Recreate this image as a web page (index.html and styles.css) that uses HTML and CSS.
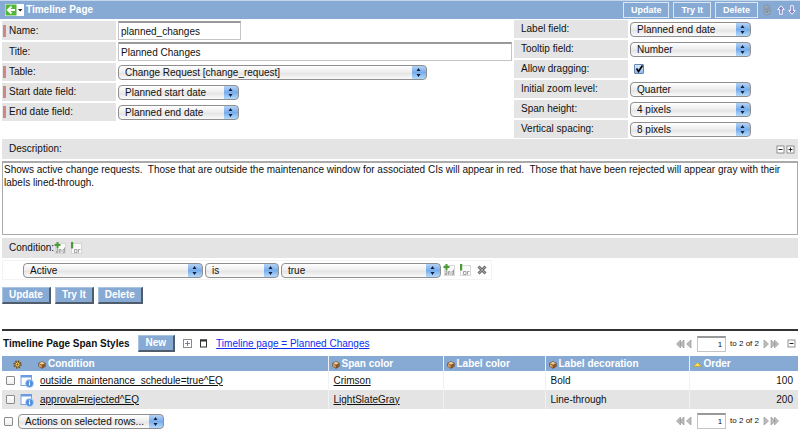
FILE: index.html
```html
<!DOCTYPE html>
<html lang="en">
<head>
<meta charset="utf-8">
<title>Timeline Page</title>
<link rel="stylesheet" href="styles.css">
</head>
<body>
<svg class="defs" aria-hidden="true">
  <symbol id="and" viewBox="0 0 12 12">
    <rect x="1.500" y="1.500" width="10" height="10" fill="#fafafa" stroke="#d0d0d0" stroke-width=".8"/>
    <path d="M2.500 7.500h1.500v3H2.500V9H4M5.500 10.800V7.500h1.500v3.300M10.500 5.500v5H9v-3h1.500" fill="none" stroke="#8d8d8d" stroke-width=".8"/>
    <path d="M2.500 0h2v2h2v2h-2v2.500h-2V4H.500V2h2z" fill="#4c9a35"/>
  </symbol>
  <symbol id="or" viewBox="0 0 12 12">
    <rect x="1.500" y="1.500" width="10" height="10" fill="#fafafa" stroke="#d0d0d0" stroke-width=".8"/>
    <path d="M4.500 7.500H7v3H4.500zM8.500 10.800V7.500h2" fill="none" stroke="#8d8d8d" stroke-width=".8"/>
    <path d="M1 0h2.200v6.500H1z" fill="#4c9a35"/>
  </symbol>
  <symbol id="cube" viewBox="0 0 8 8">
    <path d="M4 .3 7.600 2v3.600L4 7.700.4 5.600V2z" fill="#6b4320"/>
    <path d="M4 .8 7 2.200 4 3.700 1 2.200z" fill="#f0cf98"/>
    <path d="M1 2.800 3.700 4.200V7L1 5.400z" fill="#d9a05c"/>
    <path d="M7 2.800 4.400 4.200V7L7 5.400z" fill="#8d5c2e"/>
  </symbol>
  <symbol id="record" viewBox="0 0 14 14">
    <rect x="1" y="1.500" width="10.500" height="10" fill="#fff" stroke="#7ba4dc"/>
    <path d="M1 1h11v2.500H1z" fill="#6c9be0"/>
    <circle cx="9.500" cy="9.500" r="4" fill="#4f8fe0" stroke="#c4dbf5" stroke-width=".7"/>
    <path d="M9.500 6.800v.9M9.500 8.600v3" stroke="#fff" stroke-width="1.200"/>
  </symbol>
  <symbol id="first" viewBox="0 0 16 10">
    <path d="M4.500 1v8L.5 5zM8 1v8L3.500 5zM15 1v8l-4.500-4z" fill="#bcbcbc" stroke="#989898" stroke-width=".7"/>
  </symbol>
  <symbol id="last" viewBox="0 0 16 10">
    <path d="M1 1v8l4.500-4zM11.500 1v8l4-4zM8 1v8l4.500-4z" fill="#bcbcbc" stroke="#989898" stroke-width=".7"/>
  </symbol>
  <symbol id="minus" viewBox="0 0 9 9">
    <rect x="1" y="1" width="7" height="7" fill="#fff" stroke="#777" stroke-width=".8"/><path d="M2.500 4.500h4" stroke="#222"/>
  </symbol>
  <symbol id="plus" viewBox="0 0 9 9">
    <rect x="1" y="1" width="7" height="7" fill="#fff" stroke="#777" stroke-width=".8"/><path d="M2.500 4.500h4M4.500 2.500v4" stroke="#222"/>
  </symbol>
</svg>

<header class="titlebar">
  <button class="back" aria-label="Back">
    <svg width="19" height="12" viewBox="0 0 19 12"><rect width="19" height="12" fill="#fff"/><rect x=".5" y=".5" width="11" height="11" fill="#55b53a"/><path d="M10 6H3.500M6.500 2.500 3 6l3.500 3.500" fill="none" stroke="#fff" stroke-width="2"/><path d="M13 5h4.500l-2.250 2.500z" fill="#222"/></svg>
  </button>
  <h1>Timeline Page</h1>
  <div class="actions">
    <button class="flat">Update</button>
    <button class="flat">Try It</button>
    <button class="flat">Delete</button>
  </div>
  <svg class="clip" width="8" height="12" viewBox="0 0 8 12"><rect x="1" y="1" width="6" height="10" rx="3" fill="#a7b0bb" stroke="#7f8fa3"/><path d="M3 3.500v4.500q1 1.500 2 0V3" fill="none" stroke="#71839b"/></svg>
  <button class="nav" aria-label="Previous record"><svg width="8" height="10" viewBox="0 0 8 10"><path d="M4 .7 7.300 4.500H5.300v4.800H2.700V4.500H.7z" fill="#8a7fd0" stroke="#fff" stroke-width=".9"/></svg></button>
  <button class="nav" aria-label="Next record"><svg width="8" height="10" viewBox="0 0 8 10"><path d="M4 9.300.7 5.500h2V.7h2.600v4.800h2z" fill="#8a7fd0" stroke="#fff" stroke-width=".9"/></svg></button>
</header>

<main>
  <div class="form">
    <div class="fields main-fields">
      <div class="row tall"><label class="req" for="name">Name:</label><input class="text short" id="name" value="planned_changes"></div>
      <div class="row tall"><label for="title">Title:</label><input class="text" id="title" value="Planned Changes"></div>
      <div class="row"><label class="req" for="table">Table:</label><select class="wide" id="table"><option>Change Request [change_request]</option></select></div>
      <div class="row"><label class="req" for="start">Start date field:</label><select id="start"><option>Planned start date</option></select></div>
      <div class="row"><label class="req" for="end">End date field:</label><select id="end"><option>Planned end date</option></select></div>
    </div>
    <div class="fields">
      <div class="row"><label for="label">Label field:</label><select id="label"><option>Planned end date</option></select></div>
      <div class="row"><label for="tooltip">Tooltip field:</label><select id="tooltip"><option>Number</option></select></div>
      <div class="row"><label for="drag">Allow dragging:</label><input class="check aqua" type="checkbox" id="drag" checked></div>
      <div class="row"><label for="zoom">Initial zoom level:</label><select id="zoom"><option>Quarter</option></select></div>
      <div class="row"><label for="height">Span height:</label><select id="height"><option>4 pixels</option></select></div>
      <div class="row"><label for="spacing">Vertical spacing:</label><select id="spacing"><option>8 pixels</option></select></div>
    </div>
  </div>

  <div class="band">
    <label for="desc">Description:</label>
    <span class="resize">
      <button class="icon" aria-label="Shrink"><svg width="9" height="9"><use href="#minus"/></svg></button>
      <button class="icon" aria-label="Grow"><svg width="9" height="9"><use href="#plus"/></svg></button>
    </span>
  </div>
  <textarea id="desc" spellcheck="false">Shows active change requests.  Those that are outside the maintenance window for associated CIs will appear in red.  Those that have been rejected will appear gray with their labels lined-through.</textarea>

  <div class="band condition">
    <span>Condition:</span>
    <button class="icon" aria-label="Add and"><svg width="12" height="12"><use href="#and"/></svg></button>
    <button class="icon" aria-label="Add or"><svg width="12" height="12"><use href="#or"/></svg></button>
  </div>
  <div class="filter">
    <select class="f-field" aria-label="Field"><option>Active</option></select>
    <select class="f-op" aria-label="Operator"><option>is</option></select>
    <select class="f-value" aria-label="Value"><option>true</option></select>
    <button class="icon" aria-label="And"><svg width="12" height="12"><use href="#and"/></svg></button>
    <button class="icon" aria-label="Or"><svg width="12" height="12"><use href="#or"/></svg></button>
    <button class="icon" aria-label="Remove"><svg width="10" height="10" viewBox="0 0 10 10"><path d="m1.500 1.500 7 7m0-7-7 7" stroke="#747474" stroke-width="3"/><path d="m2 2 6 6m0-6-6 6" stroke="#a0a0a0"/></svg></button>
  </div>

  <div class="buttons">
    <button class="raised">Update</button>
    <button class="raised">Try It</button>
    <button class="raised">Delete</button>
  </div>

  <section class="list">
    <div class="listbar">
      <h2>Timeline Page Span Styles</h2>
      <button class="raised">New</button>
      <button class="icon" aria-label="Expand filter"><svg width="9" height="9" viewBox="0 0 9 9"><rect x=".5" y=".5" width="8" height="8" fill="#fff" stroke="#8b8b8b"/><path d="M2 4.500h5M4.500 2v5" stroke="#71839b"/></svg></button>
      <button class="icon" aria-label="Pin filter"><svg width="7" height="9" viewBox="0 0 7 9"><rect x=".5" y="1" width="6" height="7" fill="#fff" stroke="#333"/><path d="M0 1.500h7" stroke="#333" stroke-width="2"/></svg></button>
      <a class="crumb" href="#">Timeline page = Planned Changes</a>
      <div class="pager">
        <button class="icon" aria-label="Previous pages"><svg width="16" height="10"><use href="#first"/></svg></button>
        <input aria-label="Page" value="1"><span>to 2 of 2</span>
        <button class="icon" aria-label="Next pages"><svg width="16" height="10"><use href="#last"/></svg></button>
      </div>
      <button class="icon collapse" aria-label="Collapse"><svg width="9" height="9"><use href="#minus"/></svg></button>
    </div>
    <table>
      <colgroup><col class="c-tools"><col><col class="c-span"><col class="c-label"><col class="c-deco"><col class="c-order"></colgroup>
      <thead>
        <tr>
          <th class="gear"><svg width="9" height="9" viewBox="0 0 9 9"><circle cx="4.500" cy="4.500" r="3.500" fill="none" stroke="#76500f" stroke-width="1.400" stroke-dasharray="1.500 1.250"/><circle cx="4.500" cy="4.500" r="2.500" fill="#f1cf70" stroke="#7d5717"/><circle cx="4.500" cy="4.500" r="1" fill="#76500f"/></svg></th>
          <th><svg width="8" height="8"><use href="#cube"/></svg>Condition</th>
          <th><svg width="8" height="8"><use href="#cube"/></svg>Span color</th>
          <th><svg width="8" height="8"><use href="#cube"/></svg>Label color</th>
          <th><svg width="8" height="8"><use href="#cube"/></svg>Label decoration</th>
          <th><svg width="9" height="8" viewBox="0 0 9 8"><path d="M4.500 1.500 8.500 5.500h-8z" fill="#ffe34d" stroke="#b28e2c" stroke-width=".6"/></svg>Order</th>
        </tr>
      </thead>
      <tbody>
        <tr>
          <td class="tools"><div><input class="check" type="checkbox" aria-label="Select row 1"><svg width="14" height="14"><use href="#record"/></svg></div></td>
          <td><a href="#">outside_maintenance_schedule=true^EQ</a></td><td><a href="#">Crimson</a></td><td></td><td>Bold</td><td class="num">100</td>
        </tr>
        <tr>
          <td class="tools"><div><input class="check" type="checkbox" aria-label="Select row 2"><svg width="14" height="14"><use href="#record"/></svg></div></td>
          <td><a href="#">approval=rejected^EQ</a></td><td><a href="#">LightSlateGray</a></td><td></td><td>Line-through</td><td class="num">200</td>
        </tr>
      </tbody>
    </table>
    <div class="listfoot">
      <input class="check" type="checkbox" aria-label="Select all rows">
      <select class="bulk" aria-label="Actions"><option>Actions on selected rows...</option></select>
      <div class="pager">
        <button class="icon" aria-label="Previous pages"><svg width="16" height="10"><use href="#first"/></svg></button>
        <input aria-label="Page" value="1"><span>to 2 of 2</span>
        <button class="icon" aria-label="Next pages"><svg width="16" height="10"><use href="#last"/></svg></button>
      </div>
    </div>
  </section>
</main>
</body>
</html>
```
FILE: styles.css
```css
* { box-sizing: border-box; }

body {
  margin: 0;
  background: #fff;
  color: #111;
  font: 10px/12px "Liberation Sans", Arial, sans-serif;
}

button, input, select, textarea { font: inherit; color: inherit; margin: 0; }
svg { display: block; flex: none; }
h1, h2 { margin: 0; font-size: 10px; }
.defs { position: absolute; width: 0; height: 0; }

.titlebar {
  display: flex;
  align-items: center;
  height: 19px;
  padding: 0 4px 0 5px;
  background: #86aad4;
  border-top: 1px solid #c5d7ea;
  color: #fff;
}
.titlebar h1 { margin-left: 2px; }
.back, .nav, .icon { padding: 0; border: 0; background: none; flex: none; }
.actions { display: flex; gap: 4px; margin-left: auto; }
.flat {
  height: 16px;
  padding: 0 7px;
  border: 1px solid #dce7f4;
  background: #86aad4;
  font-size: 9px;
  font-weight: bold;
}
.clip { margin: 0 6px 0 5px; }
.nav { margin-right: 3px; }
.nav:last-child { margin-right: 0; }

main { padding: 1px 2px 0; }
.form { display: grid; grid-template-columns: 510fr 284fr; gap: 2px; }
.fields { display: flex; flex-direction: column; gap: 2px; }
.main-fields { padding-top: 1px; }
.row { display: grid; grid-template-columns: 114px 1fr; column-gap: 2px; align-items: center; min-height: 18px; }
.row.tall { min-height: 19px; }
.row label {
  align-self: stretch;
  display: flex;
  align-items: center;
  padding-left: 7px;
  background: #e4e4e4;
}
.row .req {
  background: linear-gradient(#cd8784, #cd8784) 1px center / 3px 12px no-repeat, #e4e4e4;
}

.text {
  width: 100%;
  height: 19px;
  padding: 0 2px;
  border: 1px solid #c4c4c4;
  border-top: 2px solid #999;
  background: #fff;
}
.text.short { width: 123px; }

select {
  appearance: none;
  width: 121px;
  height: 15px;
  padding: 0 16px 0 6px;
  border: 1px solid #8f8f8f;
  border-radius: 4px;
  line-height: 13px;
  background:
    url("data:image/svg+xml,%3Csvg xmlns='http://www.w3.org/2000/svg' width='15' height='13'%3E%3Cpath d='M5.500 5 7.500 2l2 3zM5.500 8l2 3 2-3z' fill='%23102040'/%3E%3C/svg%3E") right center / 15px 13px no-repeat,
    linear-gradient(#b5d3f5, #77aceb 50%, #b4dafb) right / 14px 100% no-repeat,
    linear-gradient(#fff, #ececec 50%, #e4e4e4 55%, #fafafa);
}
.wide { width: 309px; }

.check {
  appearance: none;
  flex: none;
  width: 9px;
  height: 9px;
  border: 1px solid #8b8b8b;
  border-radius: 1px;
  background: linear-gradient(#fff, #eee);
}
.aqua {
  width: 10px;
  height: 10px;
  margin-left: 4px;
  border-color: #6686ae;
  background: url("data:image/svg+xml,%3Csvg xmlns='http://www.w3.org/2000/svg' viewBox='0 0 8 8'%3E%3Cpath d='M1.500 3.500 3.500 6.500 7.500 .5' fill='none' stroke='%23000' stroke-width='1.700'/%3E%3C/svg%3E") center / 8px 8px no-repeat, linear-gradient(#d7e8fa, #8fbdf0);
}

.band {
  display: flex;
  align-items: center;
  height: 20px;
  margin-top: 1px;
  padding: 0 3px 0 7px;
  background: #e4e4e4;
}
.resize { display: flex; gap: 1px; margin-left: auto; }
.condition { margin-top: 3px; }
.condition .icon + .icon { margin-left: 4px; }

textarea {
  display: block;
  width: 100%;
  height: 74px;
  margin-top: 2px;
  padding: 0 1px;
  border: 1px solid #aaa;
  border-top: 2px solid #aaa;
  resize: none;
  line-height: 13px;
}

.filter {
  display: flex;
  align-items: center;
  gap: 2px;
  width: 490px;
  height: 20px;
  margin-top: 2px;
  padding-left: 20px;
  border: 1px solid #f3f3f3;
}
.f-field { width: 180px; }
.f-op { width: 74px; }
.f-value { width: 160px; }
.filter .icon { margin-right: 2px; }
.filter .icon:last-child { margin-left: 2px; }

.buttons { display: flex; gap: 4px; margin-top: 7px; }
.raised {
  height: 17px;
  padding: 0 6px;
  border: 1px solid #a9c4e4;
  border-right: 2px solid #4f5c6c;
  border-bottom: 2px solid #4f5c6c;
  background: #86aad4;
  color: #fff;
  font-weight: bold;
  line-height: 12px;
}

.list { margin-top: 25px; border-top: 2px solid #333; }
.listbar { display: flex; align-items: center; height: 25px; padding-right: 2px; }
.listbar h2 { margin: 0 8px 0 1px; }
.listbar .raised { padding: 0 7px; }
.listbar .icon { margin-left: 8px; }
.crumb { margin-left: 9px; color: #0d2df0; }
.pager { display: flex; align-items: center; margin-left: auto; font-size: 8px; }
.listbar .pager .icon, .pager .icon { margin: 0; }
.pager input {
  width: 29px;
  height: 16px;
  margin: 0 4px 0 5px;
  padding: 0 3px;
  border: 1px solid #c4c4c4;
  border-top: 2px solid #999;
  text-align: right;
}
.pager span { margin-right: 4px; }

table { width: 100%; border-collapse: collapse; table-layout: fixed; }
.c-tools { width: 33px; }
.c-span { width: 115px; }
.c-label { width: 102px; }
.c-deco { width: 144px; }
.c-order { width: 109px; }
th { height: 15px; padding: 0 3px; background: #86aad4; color: #fff; text-align: left; }
th svg { display: inline-block; margin-right: 2px; vertical-align: -2px; }
.gear { text-align: center; }
td { height: 19px; padding: 0 5px; }
th + th + th, td + td + td { border-left: 1px solid #f1f1f1; }
td a { color: inherit; }
tbody tr:nth-child(even) { background: #e4e4e4; }
.tools { padding: 0 0 0 4px; }
.tools div { display: flex; align-items: center; gap: 5px; }
.num { text-align: right; }

.listfoot { display: flex; align-items: center; height: 24px; padding: 0 19px 0 2px; }
.bulk { width: 146px; margin-left: 5px; }
```
